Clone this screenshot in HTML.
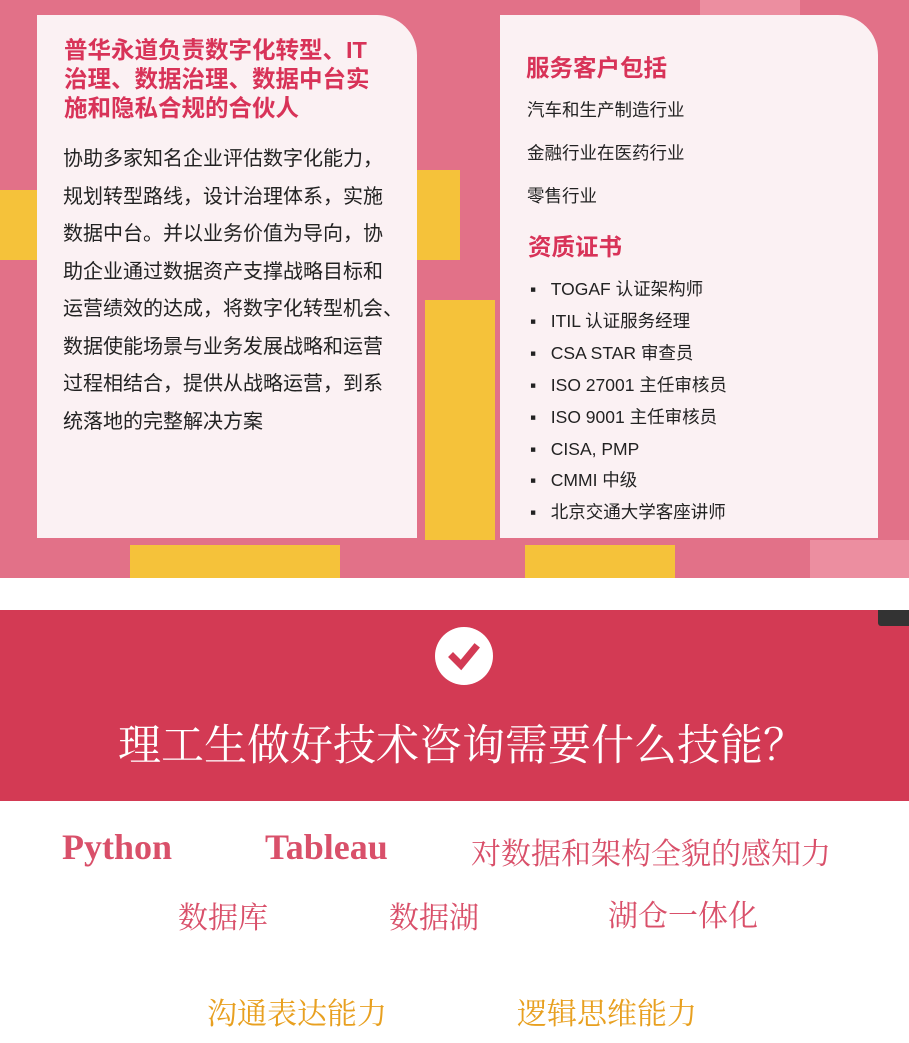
<!DOCTYPE html>
<html><head><meta charset="utf-8"><style>
*{margin:0;padding:0;box-sizing:border-box}
body{width:909px;height:1043px;background:#fff;position:relative;overflow:hidden;font-family:"Liberation Sans","Noto Sans CJK SC",sans-serif}
.a{position:absolute;white-space:nowrap}
.top{position:absolute;left:0;top:0;width:909px;height:578px;background:#e27188;overflow:hidden}
.y{position:absolute;background:#f5c23a}
.p{position:absolute;background:#ec8ea0}
.card{position:absolute;background:#fbf1f3}
.h{color:#d83358;font-weight:bold;font-size:23.5px}
.b{color:#222;font-size:20px}
.r{color:#222;font-size:17.5px}
.s{font-family:"Liberation Serif","Noto Serif CJK SC",serif}
</style></head><body>
<div class="top">
<div class="y" style="left:0;top:190px;width:40px;height:70px"></div>
<div class="y" style="left:410px;top:170px;width:50px;height:90px"></div>
<div class="y" style="left:425px;top:300px;width:70px;height:240px"></div>
<div class="y" style="left:130px;top:545px;width:210px;height:33px"></div>
<div class="y" style="left:525px;top:545px;width:150px;height:33px"></div>
<div class="p" style="left:700px;top:0;width:100px;height:40px"></div>
<div class="p" style="left:810px;top:540px;width:99px;height:38px"></div>
<div class="card" style="left:37px;top:15px;width:380px;height:523px;border-top-right-radius:40px"></div>
<div class="card" style="left:500px;top:15px;width:378px;height:523px;border-top-right-radius:40px"></div>
</div>
<div class="a h" style="left:64px;top:36px;line-height:29px">普华永道负责数字化转型、IT<br>治理、数据治理、数据中台实<br>施和隐私合规的合伙人</div>
<div class="a b" style="left:63px;top:141px;line-height:37.5px">协助多家知名企业评估数字化能力，<br>规划转型路线，设计治理体系，实施<br>数据中台。并以业务价值为导向，协<br>助企业通过数据资产支撑战略目标和<br>运营绩效的达成，将数字化转型机会、<br>数据使能场景与业务发展战略和运营<br>过程相结合，提供从战略运营，到系<br>统落地的完整解决方案</div>
<div class="a h" style="left:526px;top:49px">服务客户包括</div>
<div class="a r" style="left:527px;top:97px">汽车和生产制造行业</div>
<div class="a r" style="left:527px;top:140px">金融行业在医药行业</div>
<div class="a r" style="left:527px;top:183px">零售行业</div>
<div class="a h" style="left:528px;top:228px">资质证书</div>
<div class="a r" style="left:530px;top:274px;line-height:31.9px">▪&nbsp;&nbsp;&nbsp;TOGAF 认证架构师<br>▪&nbsp;&nbsp;&nbsp;ITIL 认证服务经理<br>▪&nbsp;&nbsp;&nbsp;CSA STAR 审查员<br>▪&nbsp;&nbsp;&nbsp;ISO 27001 主任审核员<br>▪&nbsp;&nbsp;&nbsp;ISO 9001 主任审核员<br>▪&nbsp;&nbsp;&nbsp;CISA, PMP<br>▪&nbsp;&nbsp;&nbsp;CMMI 中级<br>▪&nbsp;&nbsp;&nbsp;北京交通大学客座讲师</div>
<div style="position:absolute;left:0;top:610px;width:909px;height:191px;background:#d33a54"></div>
<div style="position:absolute;left:878px;top:610px;width:31px;height:16px;background:#333;border-radius:0 0 0 3px"></div>
<svg class="a" style="left:434px;top:626px" width="60" height="60"><circle cx="30" cy="30" r="29" fill="#fff"/><path d="M19 31 L27 39 L41 22" stroke="#d33a54" stroke-width="7" fill="none" stroke-linecap="square"/></svg>
<div class="a s" style="left:118px;top:712px;color:#fff;font-size:43px">理工生做好技术咨询需要什么技能？</div>
<div class="a s" style="left:62px;top:826px;color:#d9506a;font-size:36px;font-weight:bold">Python</div>
<div class="a s" style="left:265px;top:826px;color:#d9506a;font-size:36px;font-weight:bold">Tableau</div>
<div class="a s" style="left:471px;top:829px;color:#d9506a;font-size:30px">对数据和架构全貌的感知力</div>
<div class="a s" style="left:178px;top:893px;color:#d9506a;font-size:30px">数据库</div>
<div class="a s" style="left:389px;top:893px;color:#d9506a;font-size:30px">数据湖</div>
<div class="a s" style="left:608px;top:891px;color:#d9506a;font-size:30px">湖仓一体化</div>
<div class="a s" style="left:207px;top:989px;color:#e8a020;font-size:30px">沟通表达能力</div>
<div class="a s" style="left:517px;top:989px;color:#e8a020;font-size:30px">逻辑思维能力</div>
</body></html>
